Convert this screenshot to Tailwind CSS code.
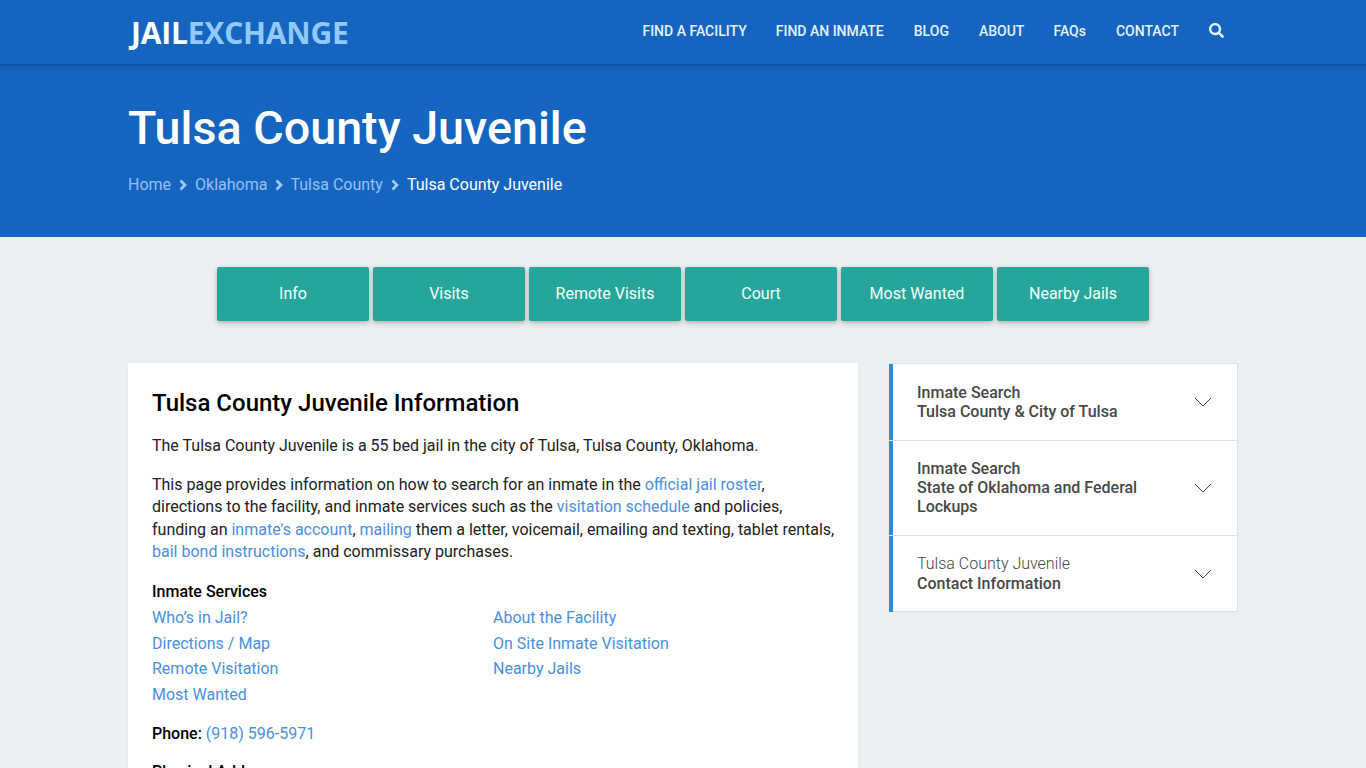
<!DOCTYPE html>
<html lang="en">
<head>
<meta charset="utf-8">
<title>Tulsa County Juvenile</title>
<script src="https://cdn.jsdelivr.net/npm/@tailwindcss/browser@4"></script>
</head>
<body class="h-screen overflow-hidden bg-[#eceff1] font-['Roboto',sans-serif] text-base text-black">
<header class="relative z-10 h-[65px] bg-[#1565c0] border-b border-[#0f519f] shadow-[0_1px_3px_rgba(0,0,0,0.18)]">
  <div class="mx-auto w-[1110px] h-full flex items-center justify-between">
    <a class="font-['Open_Sans',sans-serif] font-bold text-[30px] leading-none tracking-[-0.2px] text-white pl-[3px] pt-[2px]">JAIL<span class="text-[#90caf9]">EXCHANGE</span></a>
    <nav class="flex items-center gap-[30px] text-sm font-medium text-[#e3f2fd] pr-[14px] pb-[3px]">
      <a>FIND A FACILITY</a><a class="-ml-px">FIND AN INMATE</a><a>BLOG</a><a>ABOUT</a><a class="-ml-px">FAQs</a><a>CONTACT</a>
      <svg class="w-[15px] h-[15px]" viewBox="0 0 512 512" fill="#e3f2fd"><path d="M505 442.700L405.300 343c-4.500-4.500-10.600-7-17-7H372c27.600-35.300 44-79.700 44-128C416 93.100 322.900 0 208 0S0 93.100 0 208s93.100 208 208 208c48.300 0 92.700-16.400 128-44v16.300c0 6.400 2.500 12.500 7 17l99.700 99.700c9.400 9.400 24.600 9.400 33.900 0l28.300-28.300c9.400-9.400 9.400-24.600.1-34zM208 336c-70.700 0-128-57.200-128-128 0-70.700 57.200-128 128-128 70.700 0 128 57.200 128 128 0 70.700-57.200 128-128 128z"/></svg>
    </nav>
  </div>
</header>
<section class="h-[172px] bg-[#1565c0]">
  <div class="mx-auto w-[1110px] pt-[34px]">
    <h1 class="text-[46.700px] leading-[58px] font-medium text-white">Tulsa County Juvenile</h1>
    <div class="mt-[16px] flex items-center text-base text-[#96c1f2] leading-6">
      <a>Home</a>
      <svg class="w-6 h-6" viewBox="0 0 24 24" fill="none" stroke="#a3cbf5" stroke-width="2.600"><path d="M9.500 7.500l4.500 4.500-4.500 4.500"/></svg>
      <a>Oklahoma</a>
      <svg class="w-6 h-6 -mr-px" viewBox="0 0 24 24" fill="none" stroke="#a3cbf5" stroke-width="2.600"><path d="M9.500 7.500l4.500 4.500-4.500 4.500"/></svg>
      <a>Tulsa County</a>
      <svg class="w-6 h-6" viewBox="0 0 24 24" fill="none" stroke="#a3cbf5" stroke-width="2.600"><path d="M9.500 7.500l4.500 4.500-4.500 4.500"/></svg>
      <span class="text-white">Tulsa County Juvenile</span>
    </div>
  </div>
</section>
<div class="pt-[30px] flex justify-center gap-1">
  <a class="w-[152px] h-[54px] flex items-center justify-center rounded-[2px] bg-[#26a69a] text-[#f5fffd] shadow-[0_2px_5px_rgba(0,0,0,0.26)]">Info</a>
  <a class="w-[152px] h-[54px] flex items-center justify-center rounded-[2px] bg-[#26a69a] text-[#f5fffd] shadow-[0_2px_5px_rgba(0,0,0,0.26)]">Visits</a>
  <a class="w-[152px] h-[54px] flex items-center justify-center rounded-[2px] bg-[#26a69a] text-[#f5fffd] shadow-[0_2px_5px_rgba(0,0,0,0.26)]">Remote Visits</a>
  <a class="w-[152px] h-[54px] flex items-center justify-center rounded-[2px] bg-[#26a69a] text-[#f5fffd] shadow-[0_2px_5px_rgba(0,0,0,0.26)]">Court</a>
  <a class="w-[152px] h-[54px] flex items-center justify-center rounded-[2px] bg-[#26a69a] text-[#f5fffd] shadow-[0_2px_5px_rgba(0,0,0,0.26)]">Most Wanted</a>
  <a class="w-[152px] h-[54px] flex items-center justify-center rounded-[2px] bg-[#26a69a] text-[#f5fffd] shadow-[0_2px_5px_rgba(0,0,0,0.26)]">Nearby Jails</a>
</div>
<main class="mx-auto w-[1110px] mt-[42px] flex gap-[31px] items-start">
  <article class="w-[730px] bg-white px-6 pt-[26px] pb-6 text-[#212121] shadow-[0_1px_2px_rgba(0,0,0,0.06)]">
    <h2 class="text-2xl leading-[29px] font-medium text-black">Tulsa County Juvenile Information</h2>
    <p class="mt-[16.600px] leading-[22.400px]">The Tulsa County Juvenile is a 55 bed jail in the city of Tulsa, Tulsa County, Oklahoma.</p>
    <p class="mt-[17px] -mr-[4px] leading-[22.400px]">This page provides information on how to search for an inmate in the <a class="text-[#4a90e2]">official jail roster</a>, directions to the facility, and inmate services such as the <a class="text-[#4a90e2]">visitation schedule</a> and policies, funding an <a class="text-[#4a90e2]">inmate's account</a>, <a class="text-[#4a90e2]">mailing</a> them a letter, voicemail, emailing and texting, tablet rentals, <a class="text-[#4a90e2]">bail bond instructions</a>, and commissary purchases.</p>
    <p class="mt-[17.400px] leading-[22.400px] font-medium text-black">Inmate Services</p>
    <div class="mt-[1.700px] grid grid-cols-2 text-[#4a90e2] leading-[25.600px]">
      <div class="flex flex-col"><a>Who’s in Jail?</a><a>Directions / Map</a><a>Remote Visitation</a><a>Most Wanted</a></div>
      <div class="flex flex-col"><a>About the Facility</a><a>On Site Inmate Visitation</a><a>Nearby Jails</a></div>
    </div>
    <p class="mt-[15.300px] leading-[22.400px]"><b class="font-medium text-black">Phone:</b> <a class="text-[#4a90e2]">(918) 596-5971</a></p>
    <p class="mt-4 leading-[22.400px] font-medium text-black">Physical Address</p>
  </article>
  <aside class="w-[349px] bg-white border border-[#dde2e6] text-[#484848] leading-[19.200px]">
    <div class="relative flex items-center justify-between pl-[23px] pr-[25px] h-[77px] border-b border-[#dde2e6] font-medium before:absolute before:-left-px before:top-0 before:bottom-0 before:w-1 before:bg-[#2f8be0]">
      <div class="pl-[4px]">Inmate Search<br>Tulsa County &amp; City of Tulsa</div>
      <svg class="w-[18px] h-[10px] shrink-0" viewBox="0 0 18 10" fill="none" stroke="#424242"><path d="M1 1l8 8 8-8"/></svg>
    </div>
    <div class="relative flex items-center justify-between pl-[23px] pr-[25px] h-[95px] border-b border-[#dde2e6] font-medium leading-[19px] before:absolute before:-left-px before:top-0 before:bottom-0 before:w-1 before:bg-[#2f8be0]">
      <div class="pl-[4px] pb-[2px] w-[250px]">Inmate Search<br>State of Oklahoma and Federal Lockups</div>
      <svg class="w-[18px] h-[10px] shrink-0" viewBox="0 0 18 10" fill="none" stroke="#424242"><path d="M1 1l8 8 8-8"/></svg>
    </div>
    <div class="relative flex items-center justify-between pl-[23px] pr-[25px] h-[75px] before:absolute before:-left-px before:top-0 before:-bottom-px before:w-1 before:bg-[#2f8be0]">
      <div class="pl-[4px] leading-[20px]"><span class="font-light">Tulsa County Juvenile</span><br><span class="font-medium">Contact Information</span></div>
      <svg class="w-[18px] h-[10px] shrink-0" viewBox="0 0 18 10" fill="none" stroke="#424242"><path d="M1 1l8 8 8-8"/></svg>
    </div>
  </aside>
</main>
</body>
</html>
